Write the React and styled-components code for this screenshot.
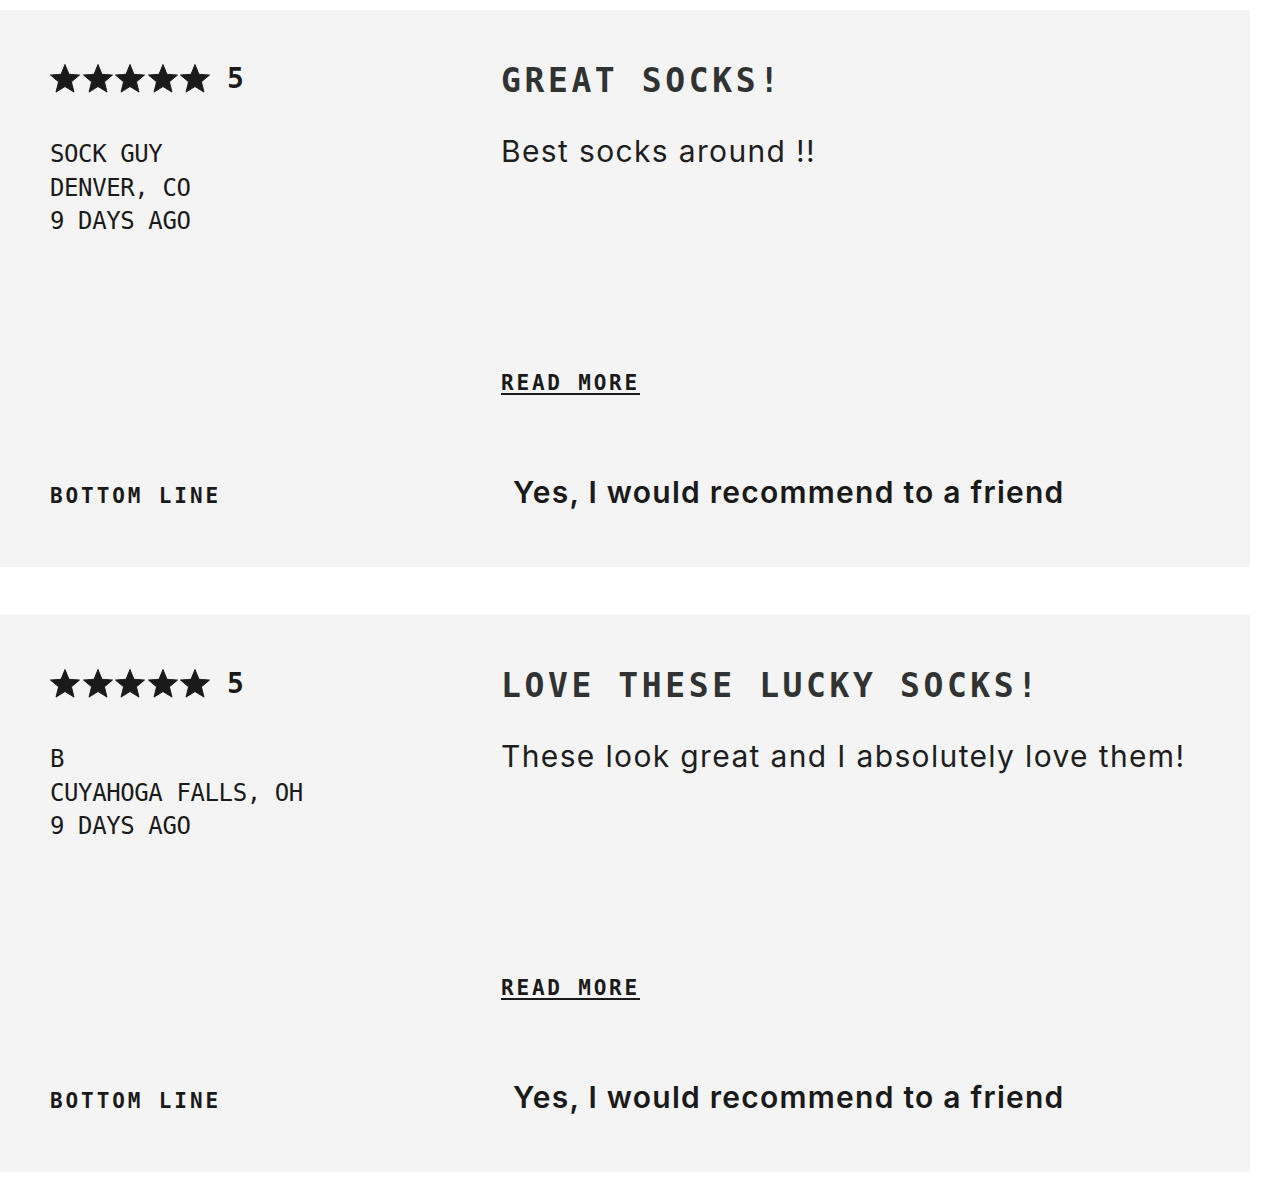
import styled, { createGlobalStyle } from 'styled-components';

const GlobalStyle = createGlobalStyle`
  html, body {
    margin: 0;
    padding: 0;
    background: #fff;
  }
  body {
    font-family: 'Inter', 'Noto Sans', sans-serif;
    color: #1a1a1a;
  }
`;

const mono = `'DejaVu Sans Mono', 'Liberation Mono', monospace`;
const sans = `'Inter', 'Noto Sans', sans-serif`;

const Page = styled.div`
  width: 1250px;
  padding-top: 10px;
  display: flex;
  flex-direction: column;
  gap: 48px;
`;

const Card = styled.article`
  background: #f4f4f4;
  padding: 54px 50px 55px 50px;
  display: grid;
  grid-template-columns: 451px 1fr;
  row-gap: 77px;
`;

const Aside = styled.div`
  display: flex;
  flex-direction: column;
`;

const RatingRow = styled.div`
  display: flex;
  align-items: center;
  height: 29px;
`;

const Stars = styled.div`
  display: flex;
  gap: 2.5px;
`;

const Score = styled.span`
  font-family: ${mono};
  font-weight: 700;
  font-size: 28px;
  line-height: 29px;
  margin-left: 17px;
  color: #1a1a1a;
`;

const Meta = styled.div`
  margin-top: 45px;
  font-family: ${mono};
  font-size: 24px;
  letter-spacing: -0.4px;
  line-height: 33.5px;
  color: #1a1a1a;
  text-transform: uppercase;
`;

const Main = styled.div`
  display: flex;
  flex-direction: column;
  align-items: flex-start;
`;

const Title = styled.h2`
  margin: 0;
  font-family: ${mono};
  font-weight: 700;
  font-size: 33px;
  line-height: 34px;
  letter-spacing: 3.6px;
  color: #313332;
  text-transform: uppercase;
`;

const Body = styled.p`
  margin: 33px 0 0;
  min-height: 200px;
  font-family: ${sans};
  font-size: 30px;
  line-height: 40px;
  letter-spacing: 1.35px;
  color: #1e1e1e;
`;

const ReadMore = styled.a`
  margin-top: 40px;
  font-family: ${mono};
  font-weight: 700;
  font-size: 21px;
  line-height: 24px;
  letter-spacing: 2.8px;
  color: #1a1a1a;
  text-decoration: underline;
  text-decoration-thickness: 2px;
  text-underline-offset: 3px;
  cursor: pointer;
`;

const Label = styled.div`
  font-family: ${mono};
  font-weight: 700;
  font-size: 21px;
  line-height: 24px;
  letter-spacing: 2.9px;
  color: #1a1a1a;
  align-self: baseline;
`;

const Recommend = styled.div`
  padding-left: 12px;
  font-family: ${sans};
  font-weight: 600;
  font-size: 30px;
  line-height: 40px;
  letter-spacing: 1.25px;
  color: #1a1a1a;
  align-self: baseline;
`;

const Star = () => (
  <svg width="30" height="29" viewBox="-0.5 -0.5 31 30">
    <polygon
      fill="#1a1a1a"
      stroke="#1a1a1a"
      strokeWidth="1"
      strokeLinejoin="round"
      points="15,0 19.12,10.14 30.03,10.92 21.66,17.96 24.29,28.58 15,22.8 5.71,28.58 8.34,17.96 -0.03,10.92 10.88,10.14"
    />
  </svg>
);

const reviews = [
  {
    id: 1,
    rating: 5,
    name: 'Sock Guy',
    place: 'Denver, CO',
    when: '9 days ago',
    title: 'Great socks!',
    body: 'Best socks around !!',
  },
  {
    id: 2,
    rating: 5,
    name: 'B',
    place: 'Cuyahoga Falls, OH',
    when: '9 days ago',
    title: 'Love these lucky socks!',
    body: 'These look great and I absolutely love them!',
  },
];

const Review = ({ review }) => (
  <Card>
    <Aside>
      <RatingRow>
        <Stars>
          {Array.from({ length: review.rating }).map((_, i) => (
            <Star key={i} />
          ))}
        </Stars>
        <Score>{review.rating}</Score>
      </RatingRow>
      <Meta>
        <div>{review.name}</div>
        <div>{review.place}</div>
        <div>{review.when}</div>
      </Meta>
    </Aside>
    <Main>
      <Title>{review.title}</Title>
      <Body>{review.body}</Body>
      <ReadMore>READ MORE</ReadMore>
    </Main>
    <Label>BOTTOM LINE</Label>
    <Recommend>Yes, I would recommend to a friend</Recommend>
  </Card>
);

export default function App() {
  return (
    <>
      <GlobalStyle />
      <Page>
        {reviews.map((r) => (
          <Review key={r.id} review={r} />
        ))}
      </Page>
    </>
  );
}
